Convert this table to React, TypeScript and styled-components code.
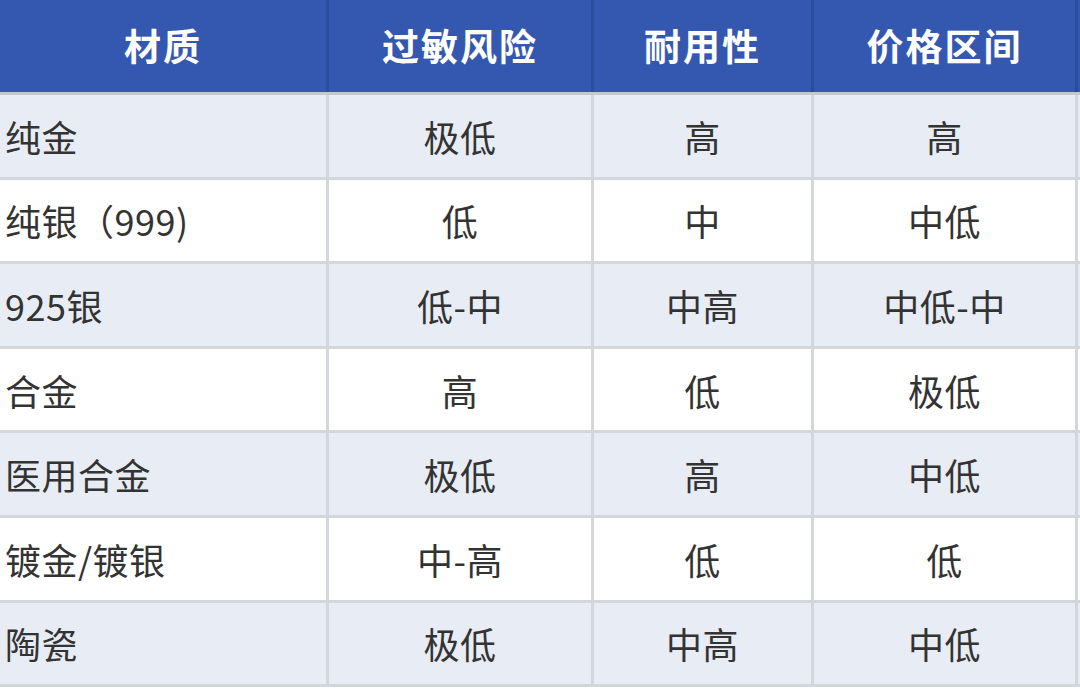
import styled, { createGlobalStyle } from 'styled-components';

// ─── Data ─────────────────────────────────────────────────────────────────────

const headers = ['材质', '过敏风险', '耐用性', '价格区间'];

const rows: string[][] = [
  ['纯金', '极低', '高', '高'],
  ['纯银（999)', '低', '中', '中低'],
  ['925银', '低-中', '中高', '中低-中'],
  ['合金', '高', '低', '极低'],
  ['医用合金', '极低', '高', '中低'],
  ['镀金/镀银', '中-高', '低', '低'],
  ['陶瓷', '极低', '中高', '中低'],
];

// ─── Global ───────────────────────────────────────────────────────────────────

const GlobalStyle = createGlobalStyle`
  html, body {
    margin: 0;
    padding: 0;
    background: #ffffff;
    overflow: hidden;
  }
  body {
    font-family: "Noto Sans CJK SC", "Noto Sans", sans-serif;
  }
`;

// ─── Table ────────────────────────────────────────────────────────────────────

const Table = styled.div`
  width: 1080px;
  height: 690px;
  overflow: hidden;
`;

const Row = styled.div<{ $head?: boolean; $striped?: boolean }>`
  display: grid;
  grid-template-columns: 329px 265px 220px 264px 1fr;
  height: ${({ $head }) => ($head ? '95px' : '84.6px')};
  box-sizing: border-box;
  border-bottom: 3px solid ${({ $head }) => ($head ? '#c3c8d2' : '#d3d6db')};
  background: ${({ $head, $striped }) =>
    $head ? '#3458b0' : $striped ? '#e8ecf5' : '#ffffff'};
`;

const Cell = styled.div<{ $head?: boolean; $left?: boolean }>`
  display: flex;
  align-items: center;
  justify-content: ${({ $left }) => ($left ? 'flex-start' : 'center')};
  padding-left: ${({ $left }) => ($left ? '5px' : '0')};
  padding-bottom: ${({ $head }) => ($head ? '3px' : '0')};
  box-sizing: border-box;
  border-right: 3px solid ${({ $head }) => ($head ? '#2c4c9e' : '#d3d6db')};
  font-size: ${({ $head }) => ($head ? '37px' : '36px')};
  font-weight: ${({ $head }) => ($head ? 700 : 400)};
  color: ${({ $head }) => ($head ? '#ffffff' : '#333333')};
  white-space: nowrap;
  letter-spacing: ${({ $head }) => ($head ? '2px' : '0.5px')};
`;

const Stub = styled.div``;

export default function App() {
  return (
    <>
      <GlobalStyle />
      <Table>
        <Row $head>
          {headers.map((h) => (
            <Cell key={h} $head>
              {h}
            </Cell>
          ))}
          <Stub />
        </Row>
        {rows.map((r, i) => (
          <Row key={r[0]} $striped={i % 2 === 0}>
            {r.map((c, j) => (
              <Cell key={j} $left={j === 0}>
                {c}
              </Cell>
            ))}
            <Stub />
          </Row>
        ))}
      </Table>
    </>
  );
}
